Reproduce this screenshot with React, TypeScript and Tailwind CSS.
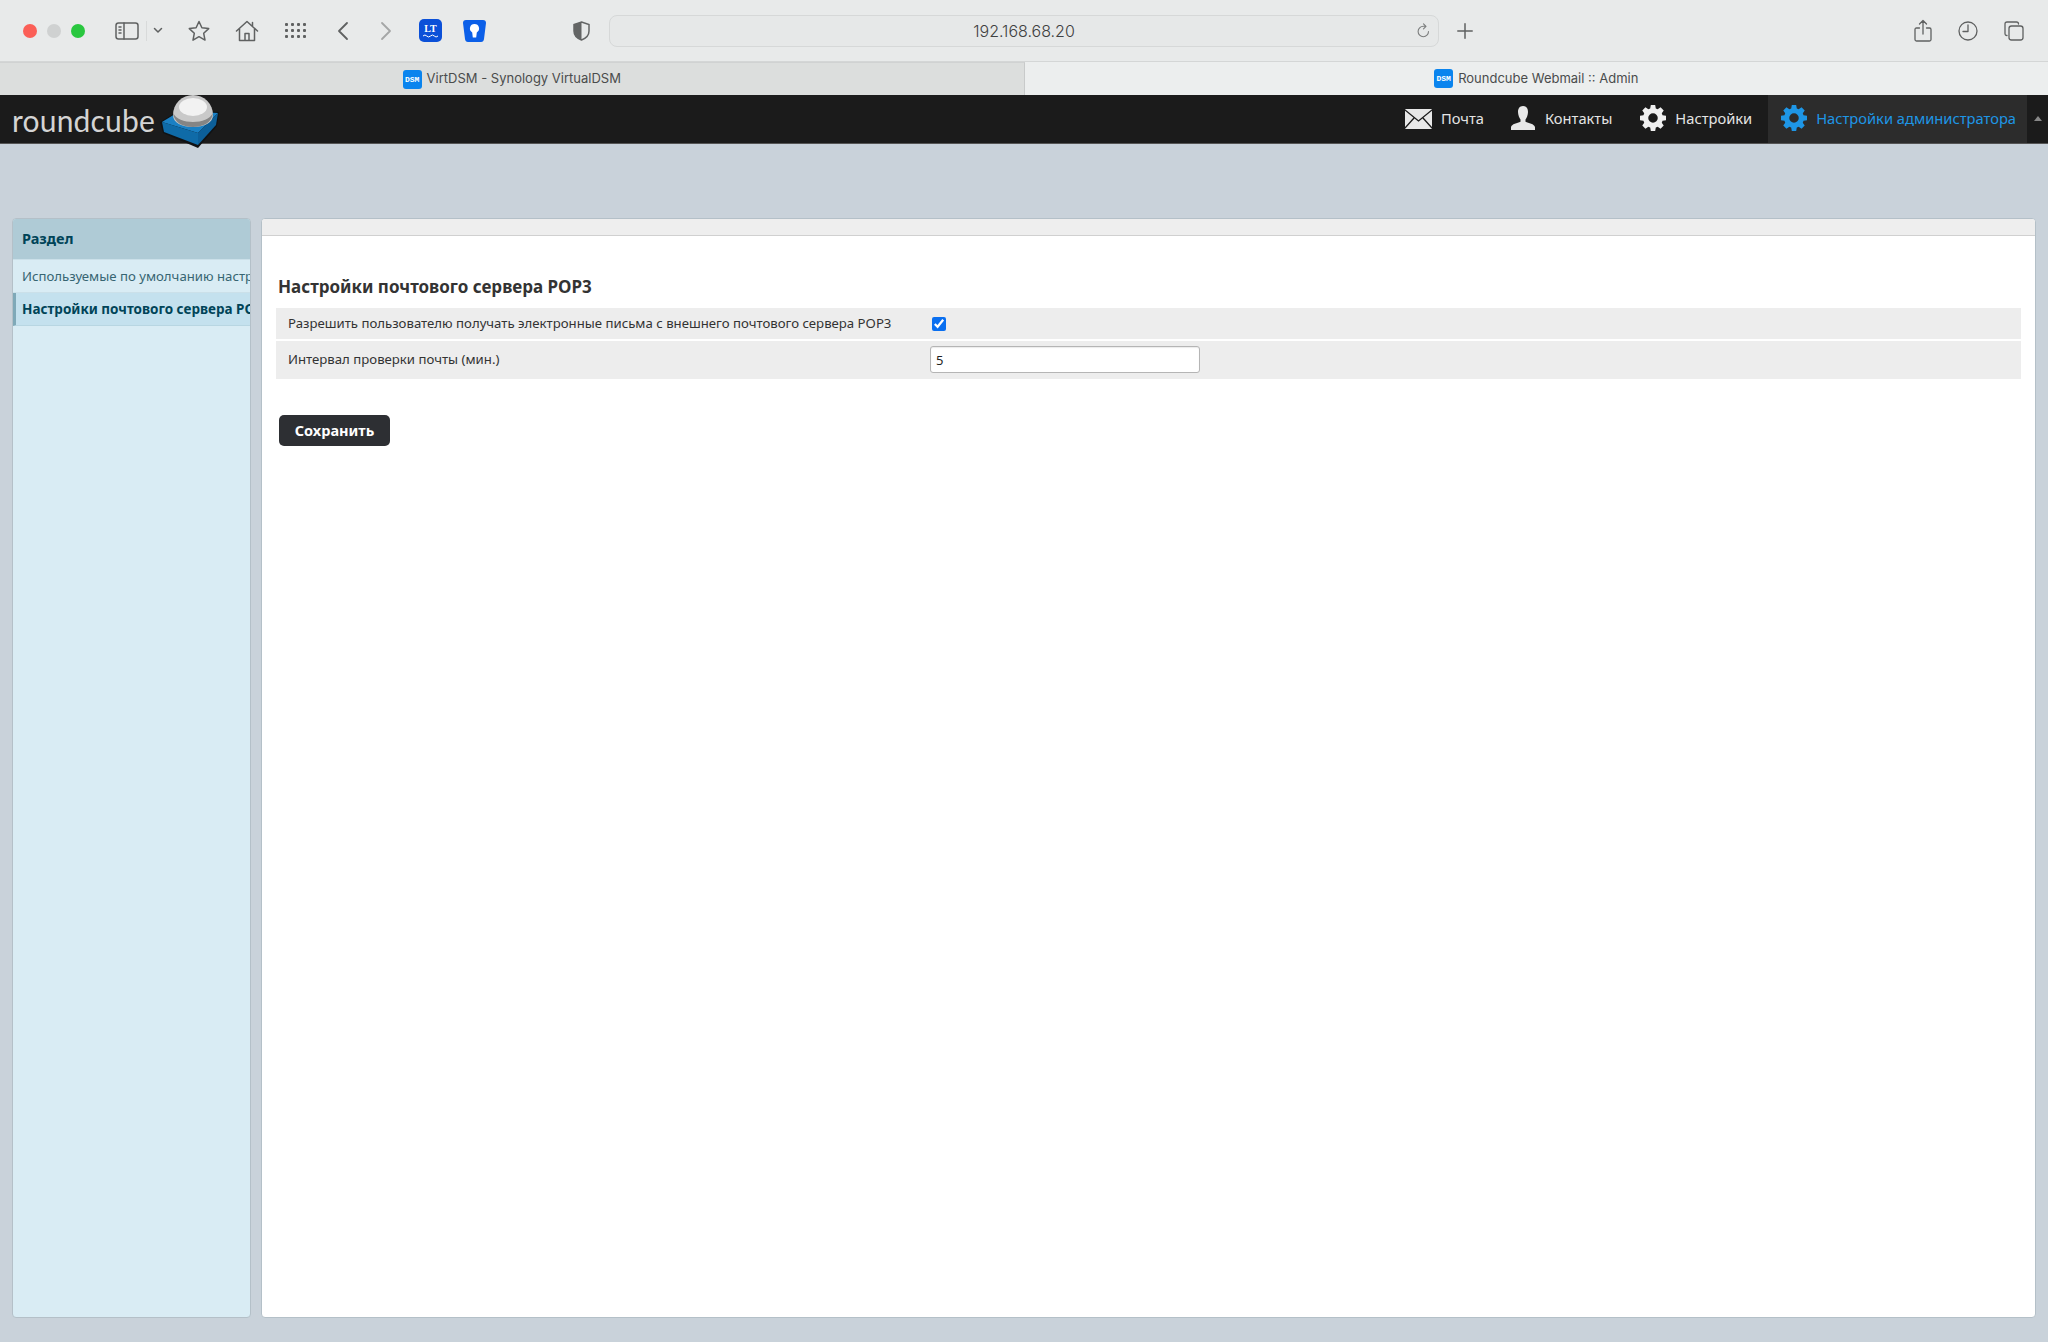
const Ico = ({ w, h, children, sw = 1.5, color = "#5f6161" }: { w: number; h: number; children: React.ReactNode; sw?: number; color?: string }) => (
  <svg width={w} height={h} viewBox={`0 0 ${w} ${h}`} fill="none" stroke={color} strokeWidth={sw} strokeLinecap="round" strokeLinejoin="round" className="shrink-0">
    {children}
  </svg>
);

const Gear = ({ color }: { color: string }) => (
  <svg width="26" height="26" viewBox="0 0 24 24" className="shrink-0 mb-[2px]">
    <path
      fill={color}
      fillRule="evenodd"
      d="M10 0h4l.6 3.2 1.7.7L19 2.1l2.9 2.9-1.8 2.7.7 1.7L24 10v4l-3.2.6-.7 1.7 1.8 2.7-2.9 2.9-2.7-1.8-1.7.7L14 24h-4l-.6-3.2-1.7-.7L5 21.9 2.1 19l1.8-2.7-.7-1.7L0 14v-4l3.2-.6.7-1.7L2.1 5 5 2.1l2.7 1.8 1.7-.7L10 0zm2 7.6a4.4 4.4 0 1 0 0 8.8 4.4 4.4 0 0 0 0-8.8z"
    />
  </svg>
);

const Toolbar = () => (
  <div className="h-[62px] bg-[#e8eaea] border-b border-[#d4d6d6] flex items-center pl-[23px] pr-[24px] shrink-0">
    <div className="flex gap-[10px]">
      <span className="w-[14px] h-[14px] rounded-full bg-[#fb5f57]" />
      <span className="w-[14px] h-[14px] rounded-full bg-[#cfd1d1]" />
      <span className="w-[14px] h-[14px] rounded-full bg-[#29c73f]" />
    </div>
    <div className="ml-[30px]">
      <Ico w={24} h={20}>
        <rect x="1" y="2" width="22" height="16" rx="2.5" />
        <path d="M9 2v16M4 6h2M4 9h2M4 12h2" />
      </Ico>
    </div>
    <div className="ml-[7px] w-px h-[20px] bg-[#d8dada]" />
    <div className="ml-[6px]">
      <Ico w={10} h={7}>
        <path d="M1.5 1.5 5 5l3.500-3.500" />
      </Ico>
    </div>
    <div className="ml-[24px]">
      <Ico w={24} h={24}>
        <path d="M12 2.500l2.900 6.300 6.800.8-5 4.700 1.300 6.800-6-3.400-6 3.400 1.300-6.800-5-4.700 6.800-.8z" />
      </Ico>
    </div>
    <div className="ml-[24px]">
      <Ico w={24} h={24}>
        <path d="M1.500 12 12 2.500 22.500 12M4.500 10v11.500h15V10M10 21.500v-7h4v7M17.500 3.500v4" />
      </Ico>
    </div>
    <div className="ml-[26px] grid grid-cols-4 gap-[3px]">
      {Array.from({ length: 12 }).map((_, i) => (
        <span key={i} className="w-[3px] h-[3px] rounded-[1px] bg-[#5f6161]" />
      ))}
    </div>
    <div className="ml-[31px]">
      <Ico w={12} h={20} sw={1.8}>
        <path d="M10 2 2 10l8 8" />
      </Ico>
    </div>
    <div className="ml-[31px]">
      <Ico w={12} h={20} sw={1.8} color="#a4a6a6">
        <path d="m2 2 8 8-8 8" />
      </Ico>
    </div>
    <div className="ml-[27px] w-[23px] h-[23px] rounded-[5px] bg-[#0b50d8] flex flex-col items-center justify-center">
      <span className="text-white text-[10px] leading-[10px] font-bold font-['Liberation_Serif',serif]">LT</span>
      <svg width="15" height="4" viewBox="0 0 15 4" fill="none" stroke="#fff" strokeWidth="1">
        <path d="M0 2q2-2 3.750 0t3.750 0 3.750 0 3.750 0" />
      </svg>
    </div>
    <div className="ml-[21px]">
      <svg width="23" height="22" viewBox="0 0 23 22" className="shrink-0">
        <path fill="#0b5fe8" d="M3 0h17q3 0 3 3l-2 16q-.400 3-3 3H5q-2.600 0-3-3L0 3q0-3 3-3z" />
        <path fill="#fff" d="M11.500 4a4.500 4.500 0 0 1 2.300 8.400l-.6 5.100h-3.400l-.6-5.100A4.500 4.500 0 0 1 11.500 4z" />
      </svg>
    </div>
    <div className="ml-[87px]">
      <svg width="17" height="20" viewBox="0 0 17 20" className="shrink-0">
        <path fill="#e8eaea" stroke="#636565" strokeWidth="1.500" d="M8.500 1 16 3.500V10c0 4.500-3.500 7.500-7.500 9C4.500 17.500 1 14.500 1 10V3.500z" />
        <path fill="#636565" d="M8.500 1 1 3.500V10c0 4.500 3.500 7.500 7.500 9z" />
      </svg>
    </div>
    <div className="ml-[19px] w-[830px] h-[32px] rounded-[8px] bg-[#e6e8e8] border border-[#d6d8d8] flex items-center justify-center relative">
      <span className="text-[16px] text-[#3f4141] font-['Inter',sans-serif] font-light">192.168.68.20</span>
      <div className="absolute right-[8px] top-[6px]">
        <Ico w={13} h={18} sw={1.100} color="#7b7d7d">
          <path d="M11.500 9.500a5.200 5.200 0 1 1-5.200-5.200H8.500M6.500 1.800l2.500 2.500-2.500 2.500" />
        </Ico>
      </div>
    </div>
    <div className="ml-[18px]">
      <Ico w={16} h={16}>
        <path d="M8 0.800v14.400M.8 8h14.400" />
      </Ico>
    </div>
    <div className="ml-auto">
      <Ico w={18} h={24} sw={1.300}>
        <path d="M5.500 9H2.500q-1.500 0-1.500 1.500v10q0 1.500 1.500 1.500h13q1.500 0 1.500-1.500v-10Q17 9 15.500 9h-3M9 15V1.500M5.500 5 9 1.500 12.500 5" />
      </Ico>
    </div>
    <div className="ml-[26px]">
      <Ico w={20} h={20} sw={1.300}>
        <circle cx="10" cy="10" r="9" />
        <path d="M10 4v6.500H5" />
      </Ico>
    </div>
    <div className="ml-[26px]">
      <Ico w={20} h={20} sw={1.300}>
        <rect x="5" y="5" width="14" height="14" rx="2.500" />
        <path d="M3 14.500q-2 0-2-2V3q0-2 2-2h9.500q2 0 2 2" />
      </Ico>
    </div>
  </div>
);

const Tab = ({ title, active }: { title: string; active?: boolean }) => (
  <div className={`flex-1 flex items-center justify-center gap-[5px] h-full ${active ? "bg-[#eceeee]" : "bg-[#dcdedd] border-r border-[#c8caca] border-t border-t-[#d0d2d2]"}`}>
    <span className="w-[19px] h-[19px] rounded-[3px] bg-[#0a84ee] text-white text-[8px] leading-[19px] text-center font-bold font-['Liberation_Mono',monospace]">DSM</span>
    <span className="text-[13px] text-[#4a4c4c] font-['Inter',sans-serif]">{title}</span>
  </div>
);

const NavItem = ({ icon, label, active }: { icon: React.ReactNode; label: string; active?: boolean }) => (
  <div className={`h-full flex items-center gap-[9px] ${active ? "bg-[#2c2c2c] pl-[13px] pr-[11px] text-[#1e96e6]" : "text-[#e4e4e4]"}`}>
    {icon}
    <span className="text-[14.700px] pb-[2px]">{label}</span>
  </div>
);

const Logo = () => (
  <div className="flex items-end h-full relative">
    <span className="ml-[12px] mb-[5px] text-[30px] leading-[36px] tracking-[0.2px] text-[#d4d4d4] font-['Lato',sans-serif]">roundcube</span>
    <svg width="60" height="54" viewBox="0 0 60 54" className="absolute left-[160px] top-0">
      <path fill="#101214" d="M0 27 20 15 59 17 57 31 38 53 3 38z" />
      <path fill="#1a80c4" d="M2 27 20 16 58 18 38 38z" />
      <path fill="#0f6ba8" d="M2 27 38 38 38 50 4 37z" />
      <path fill="#0c5f99" d="M38 38 58 18 56 30 38 50z" />
      <path fill="#c9c9c9" d="M13 20a20 20 0 0 1 40 0c0 8-9 12-20 12s-20-4-20-12z" />
      <path fill="#858585" d="M13 18c1 9 9 14 20 14s19-5 20-14c-3 6-11 9-20 9s-17-3-20-9z" />
      <ellipse cx="33" cy="12" rx="14" ry="9" fill="#f2f2f2" />
    </svg>
  </div>
);

const NavBar = () => (
  <div className="h-[49px] bg-[#1b1b1b] border-b border-[#555] flex justify-between shrink-0 font-['Noto_Sans',sans-serif]">
    <Logo />
    <div className="flex items-center h-full">
      <NavItem
        label="Почта"
        icon={
          <svg width="27" height="20" viewBox="0 0 27 20" className="shrink-0 mb-[1px]">
            <rect width="27" height="20" rx="1" fill="#e8e8e8" />
            <path d="M0 1 13.500 12 27 1M0 19l9-10M27 19 18 9" fill="none" stroke="#1b1b1b" strokeWidth="1.300" />
          </svg>
        }
      />
      <div className="w-[26px]" />
      <NavItem
        label="Контакты"
        icon={
          <svg width="26" height="24" viewBox="0 0 26 24" className="shrink-0 mb-[2px]">
            <path fill="#e8e8e8" d="M13 0c3.500 0 5 2.800 5 6s-1.500 6-2.500 7.500v2.300c3 1.500 9 2 9.500 5.500V24H1v-2.700c.500-3.500 6.500-4 9.500-5.500v-2.300C9.500 12 8 9.200 8 6s1.500-6 5-6z" />
          </svg>
        }
      />
      <div className="w-[28px]" />
      <NavItem label="Настройки" icon={<Gear color="#f0f0f0" />} />
      <div className="w-[16px]" />
      <NavItem label="Настройки администратора" active icon={<Gear color="#1e96e6" />} />
      <div className="w-[21px] h-full flex items-center justify-center">
        <span className="w-0 h-0 border-x-[4px] border-x-transparent border-b-[5px] border-b-[#888] mb-[2px]" />
      </div>
    </div>
  </div>
);

const Sidebar = () => (
  <div className="w-[239px] shrink-0 rounded-[4px] bg-[#d9ecf4] border border-[#b4c0c8] overflow-hidden whitespace-nowrap">
    <div className="h-[40px] bg-[#afcbd6] flex items-center pl-[9px] pb-[1px] text-[14.500px] font-bold text-[#004458]">Раздел</div>
    <div className="h-[34px] flex items-center pl-[9px] pt-[1px] border-b border-t border-[#cbe0e9] text-[13.200px] text-[#376572]">Используемые по умолчанию настройки</div>
    <div className="h-[33px] flex items-center pl-[6px] pt-[1px] border-l-[3px] border-[#7fa9b8] border-b border-b-[#b8d6e2] bg-[#c4e1ee] text-[13.500px] font-bold text-[#004458]">Настройки почтового сервера POP3</div>
  </div>
);

const Row = ({ label, h, children }: { label: string; h: string; children: React.ReactNode }) => (
  <div className={`${h} bg-[#ededed] flex items-center pl-[12px]`}>
    <span className="w-[642px] text-[13.200px] text-[#333] shrink-0">{label}</span>
    {children}
  </div>
);

const Main = () => (
  <div className="flex-1 rounded-[4px] bg-white border border-[#b4c0c8] overflow-hidden">
    <div className="h-[17px] bg-[#eeeeee] border-b border-[#d0d0d0]" />
    <div className="pl-[14px] pr-[14px]">
      <h1 className="mt-[39px] pl-[2px] text-[17px] leading-[24px] font-bold text-[#333]">Настройки почтового сервера POP3</h1>
      <div className="mt-[9px] flex flex-col gap-[2px]">
        <Row label="Разрешить пользователю получать электронные письма с внешнего почтового сервера POP3" h="h-[31px]">
          <input type="checkbox" defaultChecked className="ml-[2px] w-[14px] h-[14px] accent-[#0a6ff0]" />
        </Row>
        <Row label="Интервал проверки почты (мин.)" h="h-[38px]">
          <input type="text" defaultValue="5" className="w-[270px] h-[27px] mb-[1px] rounded-[3px] bg-white border border-[#b5b5b5] px-[5px] text-[13px] text-[#222] shadow-[inset_0_1px_1px_rgba(0,0,0,0.08)]" />
        </Row>
      </div>
      <button className="mt-[36px] ml-[3px] h-[31px] w-[111px] rounded-[5px] bg-[#2d2f33] text-white text-[14.500px] font-bold">Сохранить</button>
    </div>
  </div>
);

export default function App() {
  return (
    <div className="w-[2048px] h-[1342px] flex flex-col bg-[#c9d2da] overflow-hidden font-['Noto_Sans',sans-serif]">
      <Toolbar />
      <div className="h-[33px] flex shrink-0">
        <Tab title="VirtDSM - Synology VirtualDSM" />
        <Tab title="Roundcube Webmail :: Admin" active />
      </div>
      <NavBar />
      <div className="flex-1 flex gap-[10px] pt-[74px] pb-[24px] pl-[12px] pr-[12px] min-h-0">
        <Sidebar />
        <Main />
      </div>
    </div>
  );
}
